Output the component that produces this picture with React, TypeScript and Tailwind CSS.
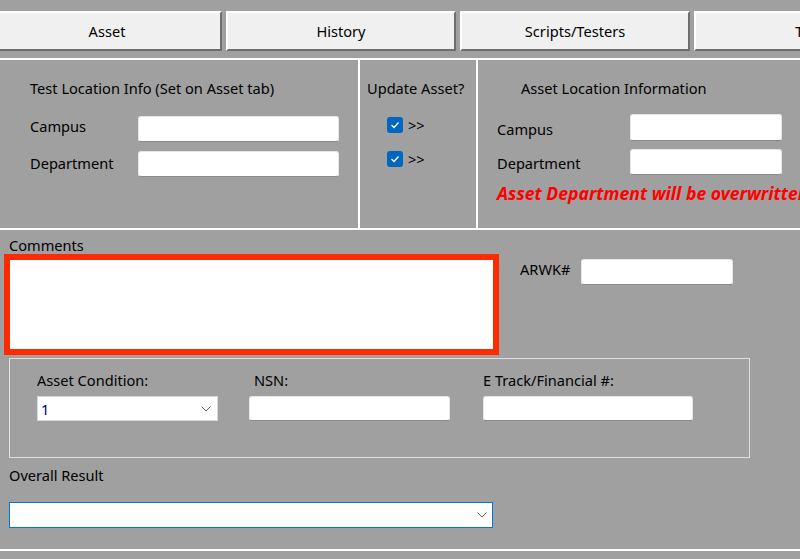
const FONT = "font-['Noto_Sans',sans-serif]";

const TABS = ["Asset", "History", "Scripts/Testers", "Test"];

function TextBox({ className = "" }: { className?: string }) {
  return (
    <div
      className={`bg-white border border-[#e6e6e6] border-b-[#8a8a8a] rounded-[3px] ${className}`}
    />
  );
}

function Chevron() {
  return (
    <svg width="10" height="6" viewBox="0 0 10 6" className="shrink-0">
      <path d="M0.5 0.5 L5 5 L9.5 0.5" fill="none" stroke="#606060" strokeWidth="1" />
    </svg>
  );
}

function Check() {
  return (
    <div className="w-[16px] h-[16px] rounded-[3px] bg-[#0067c0] flex items-center justify-center">
      <svg width="10" height="8" viewBox="0 0 10 8">
        <path d="M1.5 4 L4 6.5 L8.5 1.5" fill="none" stroke="white" strokeWidth="1.3" />
      </svg>
    </div>
  );
}

export default function App() {
  return (
    <div
      className={`w-[800px] h-[559px] overflow-hidden bg-[#a0a0a0] text-[14.6px] leading-[18px] text-black ${FONT}`}
    >
      {/* Tab buttons */}
      <div className="flex gap-[4px] pt-[11px] ml-[-8px]">
        {TABS.map((t) => (
          <div
            key={t}
            className="w-[230px] h-[40px] shrink-0 bg-[#f0f0f0] border-2 border-t-white border-l-white border-r-[#6e6e6e] border-b-[#6e6e6e] flex items-center justify-center pb-[1px]"
          >
            {t}
          </div>
        ))}
      </div>

      {/* Location section */}
      <div className="mt-[7px] h-[172px] border-y-2 border-white flex">
        <div className="w-[360px] border-r-2 border-white pl-[30px] pt-[19px]">
          <div>Test Location Info (Set on Asset tab)</div>
          <div className="mt-[19px] flex flex-col gap-[9px]">
            <div className="flex items-center h-[26px]">
              <div className="w-[108px] -mt-[7px]">Campus</div>
              <TextBox className="w-[201px] h-[26px]" />
            </div>
            <div className="flex items-center h-[26px]">
              <div className="w-[108px] -mt-[3px]">Department</div>
              <TextBox className="w-[201px] h-[26px]" />
            </div>
          </div>
        </div>

        <div className="w-[118px] border-r-2 border-white pl-[7px] pt-[19px] whitespace-nowrap">
          <div>Update Asset?</div>
          <div className="mt-[19px] ml-[20px] flex flex-col gap-[16px]">
            <div className="flex items-center gap-[5px]">
              <Check />
              <span>&gt;&gt;</span>
            </div>
            <div className="flex items-center gap-[5px]">
              <Check />
              <span>&gt;&gt;</span>
            </div>
          </div>
        </div>

        <div className="flex-1 pt-[19px] whitespace-nowrap overflow-hidden">
          <div className="pl-[43px]">Asset Location Information</div>
          <div className="pl-[19px] mt-[17px] flex flex-col gap-[8px]">
            <div className="flex items-center h-[27px]">
              <div className="w-[133px] mt-[2px]">Campus</div>
              <TextBox className="w-[152px] h-[27px]" />
            </div>
            <div className="flex items-center h-[26px]">
              <div className="w-[133px] mt-[1px]">Department</div>
              <TextBox className="w-[152px] h-[26px]" />
            </div>
            <div className="text-[17.6px] leading-[20px] font-bold italic text-[#ff0000]">
              Asset Department will be overwritten
            </div>
          </div>
        </div>
      </div>

      {/* Comments + ARWK */}
      <div className="flex">
        <div className="pl-[4px]">
          <div className="pl-[5px] pt-[6px] h-[24px]">Comments</div>
          <div className="w-[495px] h-[101px] border-[6px] border-[#ff2a00] bg-white" />
        </div>
        <div className="pl-[21px] pt-[29px] flex items-start">
          <div className="w-[61px] mt-[1px]">ARWK#</div>
          <TextBox className="w-[152px] h-[26px]" />
        </div>
      </div>

      {/* Asset group */}
      <div className="ml-[9px] mt-[3px] w-[741px] h-[100px] border border-[#dedede] pl-[27px] pt-[12px] flex">
        <div className="w-[212px]">
          <div className="h-[19px]">Asset Condition:</div>
          <div className="mt-[6px] w-[181px] h-[25px] bg-white border border-[#d8d8d8] flex items-center justify-between pl-[3px] pr-[6px]">
            <span className="text-[#000080]">1</span>
            <Chevron />
          </div>
        </div>
        <div className="w-[234px]">
          <div className="h-[19px] pl-[5px]">NSN:</div>
          <TextBox className="mt-[6px] w-[201px] h-[25px]" />
        </div>
        <div>
          <div className="h-[19px]">E Track/Financial #:</div>
          <TextBox className="mt-[6px] w-[210px] h-[25px]" />
        </div>
      </div>

      {/* Overall result */}
      <div className="pl-[9px] pt-[8px]">
        <div>Overall Result</div>
        <div className="mt-[18px] w-[484px] h-[26px] bg-white border border-[#0078d7] flex items-center justify-end pr-[5px]">
          <Chevron />
        </div>
      </div>
      <div className="mt-[21px] h-[2px] bg-white" />
    </div>
  );
}
